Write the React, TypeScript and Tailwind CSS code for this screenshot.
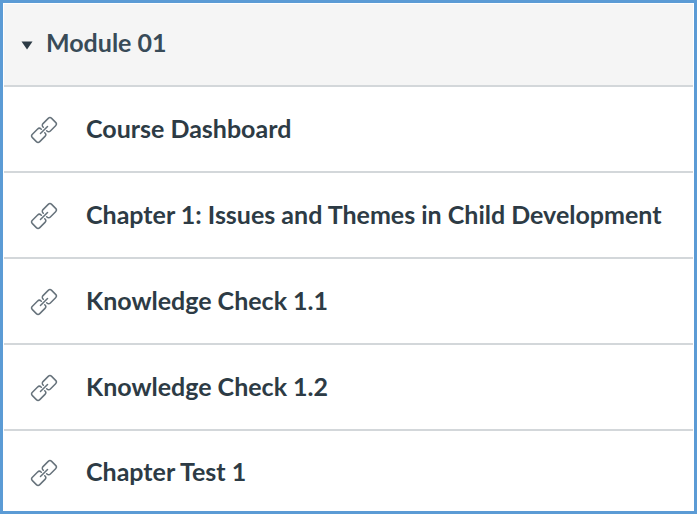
const items = [
  "Course Dashboard",
  "Chapter 1: Issues and Themes in Child Development",
  "Knowledge Check 1.1",
  "Knowledge Check 1.2",
  "Chapter Test 1"
];

function LinkIcon() {
  return (
    <svg
      aria-hidden="true"
      className="h-7 w-7 shrink-0 text-[#66727b]"
      fill="none"
      stroke="currentColor"
      strokeLinecap="round"
      strokeLinejoin="round"
      strokeWidth="1.5"
      viewBox="0 0 28 28"
    >
      <g transform="rotate(-45 14 14)">
        <path d="M12.6 11.6v-.4a2.4 2.4 0 0 0-2.4-2.4H2.8a2.4 2.4 0 0 0-2.4 2.4v5.6a2.4 2.4 0 0 0 2.4 2.4h7.4a2.4 2.4 0 0 0 2.4-2.4v-.4" />
        <path d="M15.4 11.6v-.4a2.4 2.4 0 0 1 2.4-2.4h7.4a2.4 2.4 0 0 1 2.4 2.4v5.6a2.4 2.4 0 0 1-2.4 2.4h-7.4a2.4 2.4 0 0 1-2.4-2.4v-.4" />
        <path d="M9 14h10" />
      </g>
    </svg>
  );
}

function ModuleHeader() {
  return (
    <h2 className="border-b-2 border-[#d3d7da] bg-[#f5f5f5]">
      <button
        aria-expanded="true"
        className="flex h-[81px] w-full items-center gap-3 px-4 text-left text-[#394b58]"
        type="button"
      >
        <svg aria-hidden="true" className="h-3.5 w-3.5 shrink-0 text-[#2d3b45]" fill="currentColor" viewBox="0 0 14 14">
          <path d="M1.5 3.5h11L7 11.5z" />
        </svg>
        <span className="pb-1.5">Module 01</span>
      </button>
    </h2>
  );
}

export default function App() {
  return (
    <main className="border-3 border-[#5b9bd5] bg-white px-px pt-px font-['Lato',sans-serif] text-[25px] leading-8 font-bold text-[#2d3b45]">
      <ModuleHeader />
      <ul className="divide-y-2 divide-[#d3d7da]">
        {items.map((item) => (
          <li className="group" key={item}>
            <a className="flex h-21 items-center gap-7 px-6.5 pt-0.5 group-last:h-20 group-last:pt-1" href="#">
              <LinkIcon />
              <span className="pb-1">{item}</span>
            </a>
          </li>
        ))}
      </ul>
    </main>
  );
}
